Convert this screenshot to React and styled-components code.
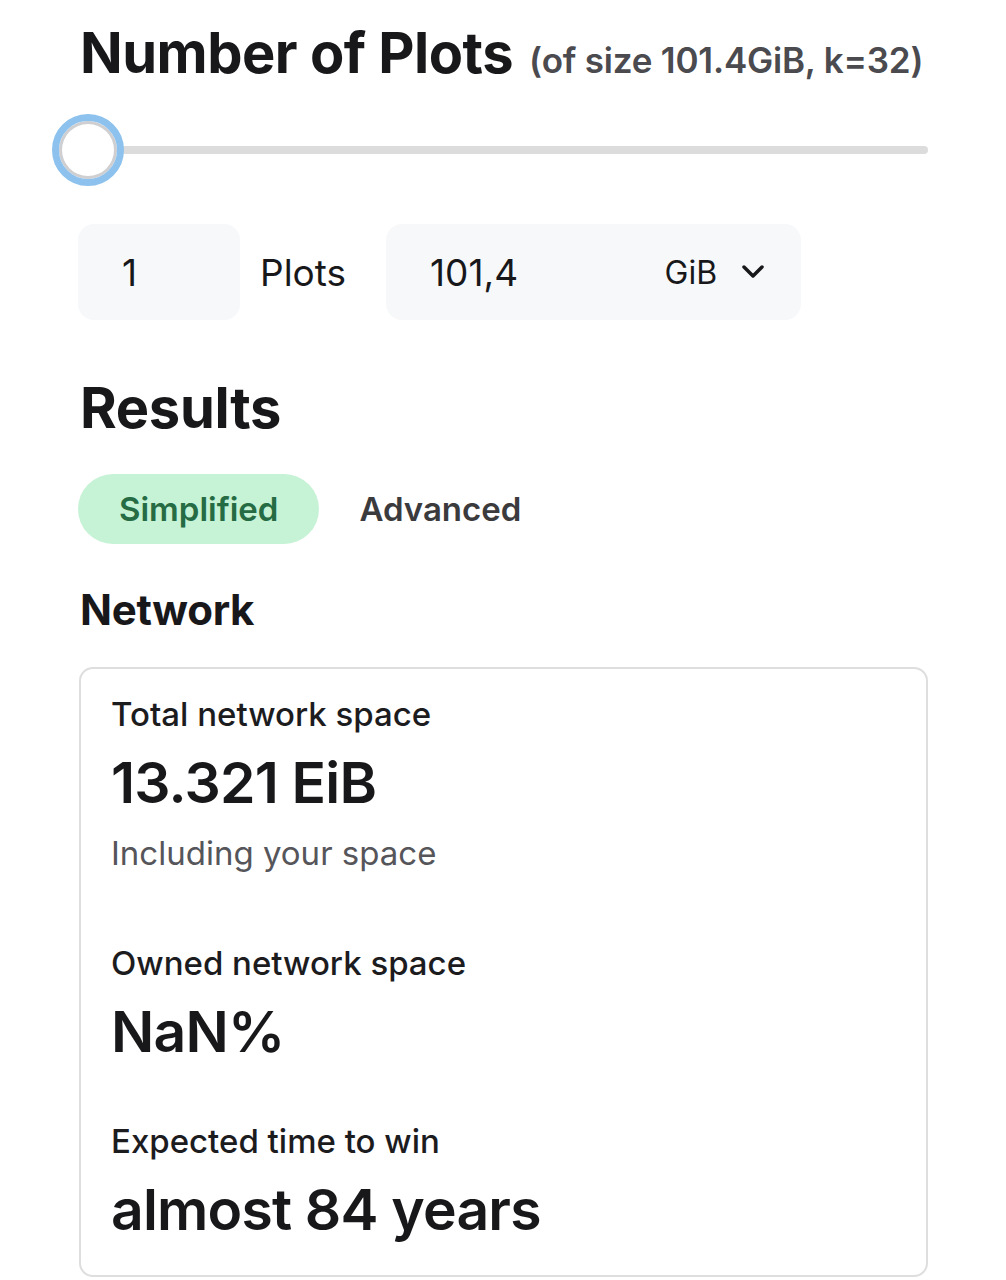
import React, { useState } from 'react';
import styled, { createGlobalStyle } from 'styled-components';

const GlobalStyle = createGlobalStyle`
  body {
    margin: 0;
    background: #fff;
    font-family: Inter, "Noto Sans", "Liberation Sans", sans-serif;
    color: #18181b;
  }
`;

const Page = styled.div`
  padding: 25px 78px 0 80px;
  width: 1006px;
  box-sizing: border-box;
`;

const TitleRow = styled.div`
  display: flex;
  align-items: baseline;
  gap: 16px;
`;

const Title = styled.h1`
  margin: 0;
  font-size: 56px;
  line-height: 1;
  font-weight: 700;
  letter-spacing: -0.5px;
`;

const SubTitle = styled.span`
  font-size: 35px;
  font-weight: 600;
  color: #4a4a4f;
  letter-spacing: -0.2px;
`;

const SliderWrap = styled.div`
  position: relative;
  margin: 32px 0 0 -28px;
  height: 74px;
  display: flex;
  align-items: center;
`;

const Track = styled.div`
  flex: 1;
  height: 8px;
  margin-left: 8px;
  border-radius: 4px;
  background: #dcdcdc;
`;

const Thumb = styled.div`
  position: absolute;
  left: 0;
  top: 1px;
  width: 58px;
  height: 58px;
  border-radius: 50%;
  background: #fff;
  border: 7px solid #8cc2ed;
  box-shadow: inset 0 0 0 3px #cfcfd2;
`;

const InputRow = styled.div`
  display: flex;
  align-items: center;
  margin-top: 37px;
  margin-left: -2px;
`;

const Field = styled.div`
  display: flex;
  align-items: center;
  height: 96px;
  width: ${(p) => p.$w}px;
  box-sizing: border-box;
  padding: 0 44px;
  background: #f7f8fa;
  border-radius: 16px;
  font-size: 37px;
  color: #18181b;
`;

const Unit = styled.span`
  font-size: 37px;
  margin: 0 40px 0 20px;
  color: #18181b;
`;

const Grow = styled.span`
  flex: 1;
`;

const UnitSelect = styled.span`
  display: flex;
  align-items: center;
  gap: 24px;
  font-size: 32px;
  margin-right: -8px;
`;

const Heading = styled.h2`
  margin: ${(p) => p.$mt}px 0 0;
  font-size: ${(p) => p.$size}px;
  line-height: 1;
  font-weight: 700;
  letter-spacing: -0.3px;
`;

const Tabs = styled.div`
  display: flex;
  align-items: center;
  gap: 40px;
  margin-top: 38px;
  margin-left: -2px;
`;

const Tab = styled.button`
  border: none;
  font-family: inherit;
  font-size: 33px;
  font-weight: 600;
  height: 70px;
  padding: 0 ${(p) => (p.$active ? 41 : 0)}px;
  border-radius: 35px;
  background: ${(p) => (p.$active ? '#c6f2d6' : 'transparent')};
  color: ${(p) => (p.$active ? '#256b43' : '#3b3b3e')};
  cursor: pointer;
`;

const Card = styled.div`
  margin: 36px 0 0 -1px;
  border: 2px solid #dedede;
  border-radius: 14px;
  padding: 25px 30px 33px;
  display: flex;
  flex-direction: column;
  gap: 58px;
`;

const Stat = styled.div`
  display: flex;
  flex-direction: column;
`;

const Label = styled.div`
  font-size: 33px;
  font-weight: 500;
  color: #1c1c1f;
`;

const Value = styled.div`
  font-size: 57px;
  font-weight: 600;
  letter-spacing: -0.8px;
  margin-top: 18px;
  line-height: 1.1;
`;

const Note = styled.div`
  font-size: 33px;
  color: #55555a;
  margin: 18px 0 12px;
`;

function Chevron() {
  return (
    <svg width="24" height="16" viewBox="0 0 24 16" fill="none">
      <path d="M3 3l9 9 9-9" stroke="#18181b" strokeWidth="3.5" strokeLinecap="round" strokeLinejoin="round" />
    </svg>
  );
}

export default function App() {
  const [tab, setTab] = useState(0);

  return (
    <Page>
      <GlobalStyle />
      <TitleRow>
        <Title>Number of Plots</Title>
        <SubTitle>(of size 101.4GiB, k=32)</SubTitle>
      </TitleRow>

      <SliderWrap>
        <Track />
        <Thumb />
      </SliderWrap>

      <InputRow>
        <Field $w={162}>1</Field>
        <Unit>Plots</Unit>
        <Field $w={415}>
          101,4
          <Grow />
          <UnitSelect>
            GiB
            <Chevron />
          </UnitSelect>
        </Field>
      </InputRow>

      <Heading $size={56} $mt={60}>Results</Heading>

      <Tabs>
        <Tab $active={tab === 0} onClick={() => setTab(0)}>Simplified</Tab>
        <Tab $active={tab === 1} onClick={() => setTab(1)}>Advanced</Tab>
      </Tabs>

      <Heading $size={42} $mt={45}>Network</Heading>

      <Card>
        <Stat>
          <Label>Total network space</Label>
          <Value>13.321 EiB</Value>
          <Note>Including your space</Note>
        </Stat>
        <Stat>
          <Label>Owned network space</Label>
          <Value>NaN%</Value>
        </Stat>
        <Stat>
          <Label>Expected time to win</Label>
          <Value>almost 84 years</Value>
        </Stat>
      </Card>
    </Page>
  );
}
